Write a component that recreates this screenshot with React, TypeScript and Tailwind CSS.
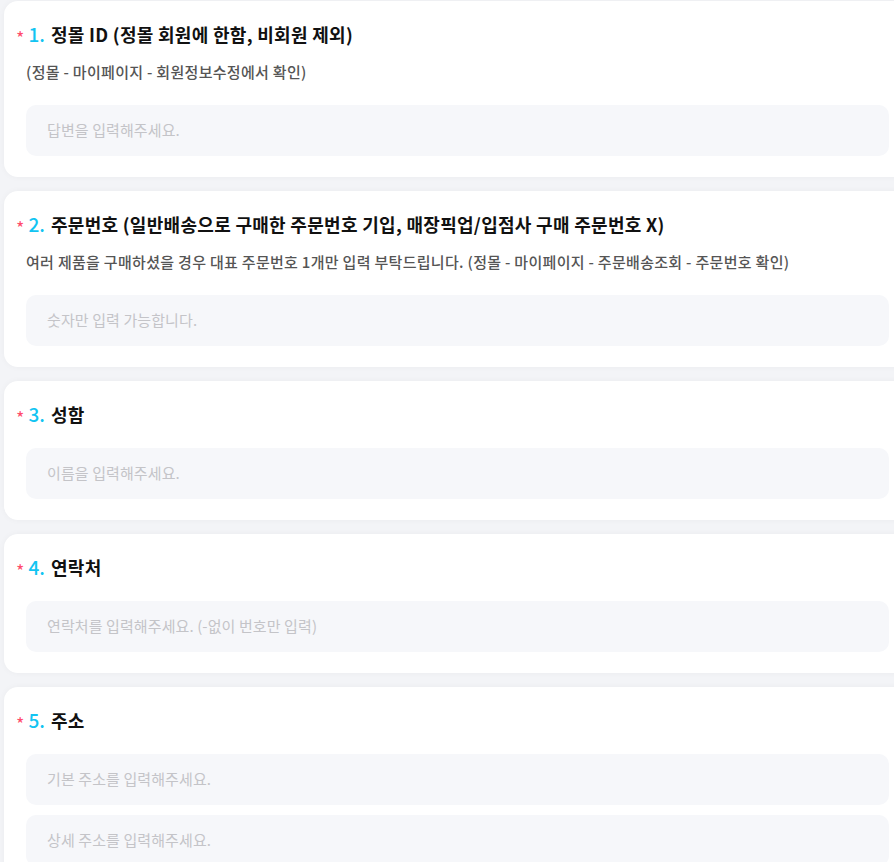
import React from "react";

type Q = {
  n: string;
  title: string;
  sub?: string;
  placeholders: string[];
};

const questions: Q[] = [
  {
    n: "1.",
    title: "정몰 ID (정몰 회원에 한함, 비회원 제외)",
    sub: "(정몰 - 마이페이지 - 회원정보수정에서 확인)",
    placeholders: ["답변을 입력해주세요."],
  },
  {
    n: "2.",
    title: "주문번호 (일반배송으로 구매한 주문번호 기입, 매장픽업/입점사 구매 주문번호 X)",
    sub: "여러 제품을 구매하셨을 경우 대표 주문번호 1개만 입력 부탁드립니다. (정몰 - 마이페이지 - 주문배송조회 - 주문번호 확인)",
    placeholders: ["숫자만 입력 가능합니다."],
  },
  { n: "3.", title: "성함", placeholders: ["이름을 입력해주세요."] },
  { n: "4.", title: "연락처", placeholders: ["연락처를 입력해주세요. (-없이 번호만 입력)"] },
  { n: "5.", title: "주소", placeholders: ["기본 주소를 입력해주세요.", "상세 주소를 입력해주세요."] },
];

function Card({ q }: { q: Q }) {
  return (
    <div className="w-[907px] shrink-0 rounded-[14px] bg-white px-[22px] pt-[20px] pb-[21px] shadow-[0_0_6px_rgba(0,0,0,0.04)]">
      <div className="-ml-[10px] flex items-center leading-[26px]">
        <span className="mr-[4px] mt-[6px] text-[18px] leading-[16px] text-[#ff4d6d]">*</span>
        <span className="mr-[6px] text-[19px] font-medium text-[#12c4f2]">{q.n}</span>
        <span className="text-[18px] font-bold tracking-[0.3px] text-[#111]">{q.title}</span>
      </div>
      {q.sub && (
        <div className="mt-[14px] text-[15px] font-medium leading-[21px] tracking-[0.3px] text-[#555]">
          {q.sub}
        </div>
      )}
      <div className={`${q.sub ? "mt-[23px]" : "mt-[21px]"} flex flex-col gap-[10px]`}>
        {q.placeholders.map((p) => (
          <div
            key={p}
            className="flex h-[51px] items-center rounded-[10px] bg-[#f6f7fa] pl-[21px] text-[15px] tracking-[0.1px] text-[#c4c4c8]"
          >
            {p}
          </div>
        ))}
      </div>
    </div>
  );
}

export default function App() {
  return (
    <div
      className="h-[862px] w-[894px] overflow-hidden bg-[#f3f4f7] pl-[4px] pt-[1px]"
      style={{ fontFamily: '"Noto Sans CJK KR", "Noto Sans", sans-serif' }}
    >
      <div className="flex flex-col gap-[14px]">
        {questions.map((q) => (
          <Card key={q.n} q={q} />
        ))}
      </div>
    </div>
  );
}
